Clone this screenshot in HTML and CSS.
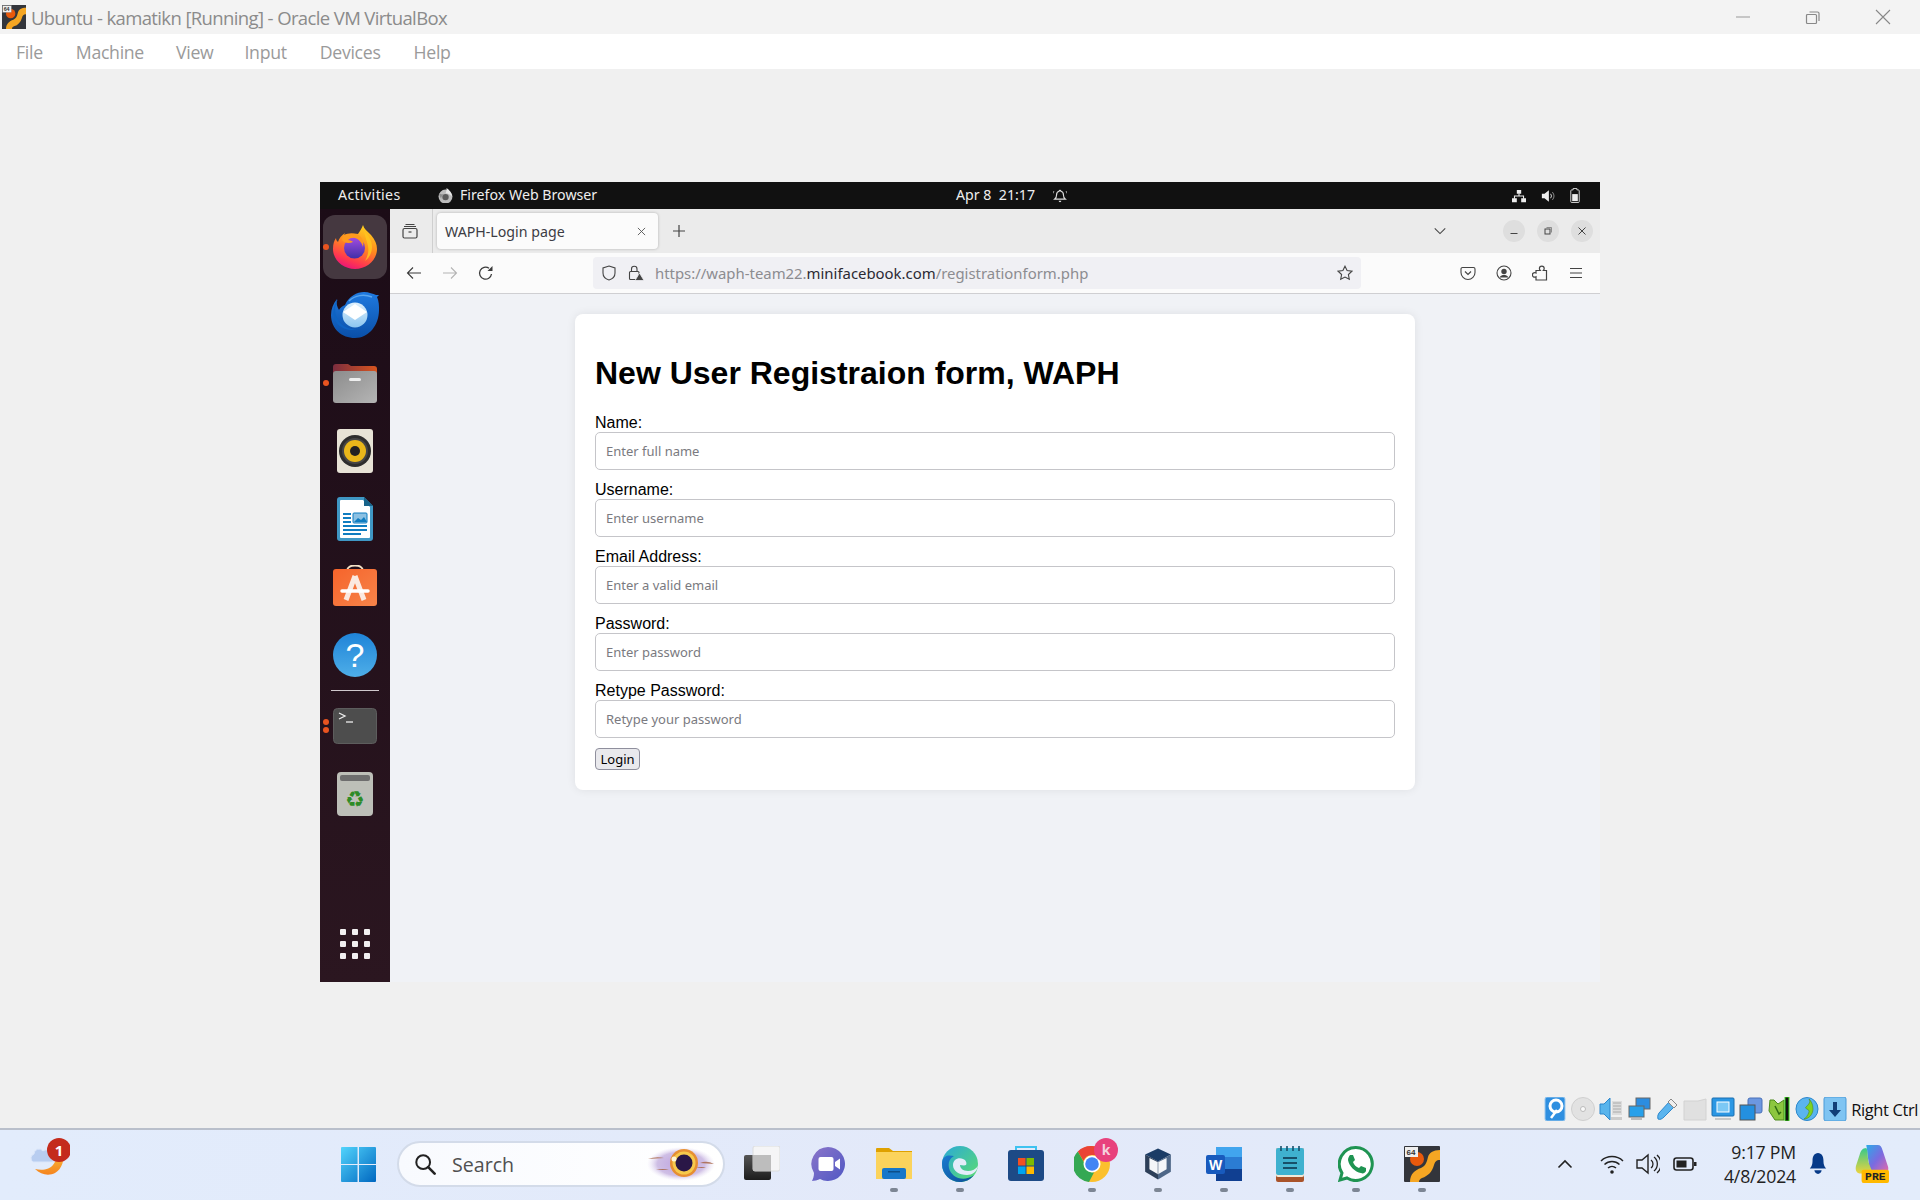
FILE: index.html
```html
<!DOCTYPE html>
<html lang="en">
<head>
<meta charset="utf-8">
<title>Ubuntu - kamatikn [Running] - Oracle VM VirtualBox</title>
<link rel="stylesheet" href="styles.css">
</head>
<body>
<div class="app">
  <header class="titlebar">
    <svg class="title-icon" viewBox="0 0 36 36"><rect width="36" height="36" fill="#33353b"/><path d="M6 36c0-8 5-12 11-14 5-2 6-7 7-11 1-4 5-7 12-7v10c-4 0-5 2-6 5-2 7-6 11-12 13-2 1-3 2-3 4z" fill="#f5a623"/><circle cx="13" cy="13" r="7" fill="#e8590c"/><rect x="1" y="1" width="13" height="10" fill="#eee" stroke="#888" stroke-width=".5"/><text x="2.500" y="9" class="svg-tiny">64</text></svg>
    <span class="title-text">Ubuntu - kamatikn [Running] - Oracle VM VirtualBox</span>
    <div class="win-controls">
      <svg class="win-btn" viewBox="0 0 16 16"><path d="M1 8h14" stroke="#999" fill="none"/></svg>
      <svg class="win-btn" viewBox="0 0 16 16"><path d="M2.500 5.500h8a1 1 0 0 1 1 1v7a1 1 0 0 1-1 1h-8a1 1 0 0 1-1-1v-7a1 1 0 0 1 1-1zM4.500 3h8a1.500 1.500 0 0 1 1.500 1.500V12" stroke="#888" stroke-width="1.200" fill="none"/></svg>
      <svg class="win-btn" viewBox="0 0 16 16"><path d="M1 1l14 14M15 1L1 15" stroke="#888" stroke-width="1.100" fill="none"/></svg>
    </div>
  </header>
  <nav class="menubar">
    <span class="menu-item menu-file">File</span>
    <span class="menu-item menu-machine">Machine</span>
    <span class="menu-item menu-view">View</span>
    <span class="menu-item menu-input">Input</span>
    <span class="menu-item menu-devices">Devices</span>
    <span class="menu-item">Help</span>
  </nav>

  <main class="host">
    <section class="vm">
      <div class="gnome-bar">
        <div class="gnome-left">
          <span class="gnome-activities">Activities</span>
          <svg class="gnome-ff" viewBox="1 1 14 14"><circle cx="8" cy="9" r="6.500" fill="#bdbdbd"/><circle cx="8" cy="9.500" r="3" fill="#5c5c5c"/><path d="M9 1c3 2 5 5 5 8-2-2-4-3-6-3 1-2 1-3 1-5z" fill="#e8e8e8"/><path d="M2 6c1 1 3 1 5 1-2 1-3 2-3 4-1-1-2-3-2-5z" fill="#8e8e8e"/></svg>
          <span class="gnome-app">Firefox Web Browser</span>
        </div>
        <div class="gnome-center">
          <span class="gnome-clock">Apr 8&nbsp;&nbsp;21:17</span>
          <svg class="gnome-sys" viewBox="0 0 16 16"><path d="M8 1.500a1 1 0 0 1 1 1c2 .5 3 2 3 4.500 0 2.500.7 3.500 2 4.500H2c1.300-1 2-2 2-4.500 0-2.500 1-4 3-4.500a1 1 0 0 1 1-1z" fill="none" stroke="#ddd" stroke-width="1.300"/><path d="M6.500 13.500a1.500 1.500 0 0 0 3 0z" fill="#ddd"/><path d="M1 2.500A7 7 0 0 0 0 5M15 2.500a7 7 0 0 1 1 2.500" stroke="#ddd" fill="none"/></svg>
        </div>
        <div class="gnome-right">
          <svg class="gnome-sys" viewBox="0 0 16 16"><path d="M5.500 1h5v4.500h-5zM0 10.500h5.500V15H0zM10.500 10.500H16V15h-5.500z" fill="#eee"/><path d="M8 5v3M2.800 11V8h10.400v3" stroke="#eee" stroke-width="1.200" fill="none"/></svg>
          <svg class="gnome-sys" viewBox="0 0 16 16"><path d="M1 5.500h3L9 1.500v13l-5-4H1z" fill="#eee"/><path d="M11 5.500a4 4 0 0 1 0 5" stroke="#ddd" stroke-width="1.100" fill="none"/><path d="M13 3.500a7 7 0 0 1 0 9" stroke="#999" fill="none"/></svg>
          <svg class="gnome-batt" viewBox="0 0 10 16"><path d="M3 .5h4v1.500h1.500a1 1 0 0 1 1 1V14.500a1 1 0 0 1-1 1h-7a1 1 0 0 1-1-1V3a1 1 0 0 1 1-1H3z" fill="none" stroke="#ddd"/><rect x="2" y="6.500" width="6" height="7.500" fill="#eee"/></svg>
        </div>
      </div>

      <div class="desktop">
        <aside class="dock">
          <div class="dock-item dock-active">
            <span class="dot"></span>
            <svg class="dock-icon-lg" viewBox="0 0 44 44">
              <defs>
                <linearGradient id="ff1" x1="0.700" y1="0" x2="0.300" y2="1"><stop offset="0" stop-color="#ffd21f"/><stop offset=".45" stop-color="#ff8a1e"/><stop offset=".8" stop-color="#ff3750"/><stop offset="1" stop-color="#e9127c"/></linearGradient>
                <linearGradient id="ff2" x1="0" y1="0" x2="0" y2="1"><stop offset="0" stop-color="#a24ce0"/><stop offset="1" stop-color="#3f2fa8"/></linearGradient>
              </defs>
              <path d="M30 0c1 4 4 6 8 10 4 5 6 9 6 14 0 11-10 20-22 20S0 35 0 24c0-5 1-8 3-11 0 2 1 3 2 4 1-4 4-7 7-9-1 2-1 3 0 4 3-3 8-4 13-3 2-3 4-6 5-9z" fill="url(#ff1)"/>
              <circle cx="21.500" cy="23" r="10.500" fill="url(#ff2)"/>
              <path d="M11 10c4-2 11-3 16 1 3 3 4 7 3 11-1-4-4-8-8-9-4-1-6 0-7 2 2 0 4 1 5 2-4 2-9 1-11-2 0-2 1-4 2-5z" fill="#ff9a1e"/>
              <path d="M31 6c4 4 8 9 8 16 0 6-3 11-7 14 3-5 4-10 3-15-1-5-3-9-4-15z" fill="#ffc61e" opacity=".85"/>
            </svg>
          </div>
          <div class="dock-item">
            <svg class="dock-icon-xl" viewBox="0 0 48 48">
              <defs><linearGradient id="tb1" x1="0" y1="0" x2="0" y2="1"><stop offset="0" stop-color="#1f7ae0"/><stop offset="1" stop-color="#0a4fa8"/></linearGradient><linearGradient id="tb2" x1="0" y1="0" x2="0" y2="1"><stop offset="0" stop-color="#dff0fc"/><stop offset="1" stop-color="#8cc6f0"/></linearGradient></defs>
              <path d="M14 14C18 5 26 1 33 1c5 0 9 2 12 3l3 0-2 2c2 4 2 9 2 13 0 15-10 28-24 28C11 47 0 38 0 24c0-6 2-11 6-16-1 4 0 8 2 11 1-2 3-4 6-5z" fill="url(#tb1)"/>
              <path d="M7 8c-3 6-4 12-1 19 3 7 11 12 20 11-8 3-18-1-22-9C1 23 2 14 7 8z" fill="#0d63c4"/>
              <path d="M18 10c6-6 15-7 23-4" stroke="#5aa6ee" stroke-width="1.500" fill="none"/>
              <circle cx="24" cy="24" r="12.500" fill="url(#tb2)"/>
              <path d="M12 21l12-8 12 8-12 8z" fill="#fff"/>
            </svg>
          </div>
          <div class="dock-item">
            <span class="dot"></span>
            <svg class="dock-icon-lg" viewBox="0 0 44 40">
              <defs><linearGradient id="fl1" x1="0" y1="0" x2="1" y2="0"><stop offset="0" stop-color="#7c2d3f"/><stop offset="1" stop-color="#d8551f"/></linearGradient><linearGradient id="fl2" x1="0" y1="0" x2="1" y2="1"><stop offset="0" stop-color="#8c8c8c"/><stop offset="1" stop-color="#b5b5b5"/></linearGradient></defs>
              <path d="M0 4a3 3 0 0 1 3-3h12l3 2h23a3 3 0 0 1 3 3v10H0z" fill="url(#fl1)"/>
              <rect y="8" width="44" height="32" rx="3" fill="url(#fl2)"/>
              <rect x="16" y="15" width="12" height="3" rx="1.500" fill="#eee"/>
            </svg>
          </div>
          <div class="dock-item">
            <svg class="dock-icon-md" viewBox="0 0 36 44">
              <rect width="36" height="44" rx="3" fill="#e7e3d6"/>
              <circle cx="18" cy="22" r="16" fill="#2d2d2d"/>
              <circle cx="18" cy="22" r="13" fill="#464646"/>
              <circle cx="18" cy="22" r="11" fill="#e9b71a"/>
              <circle cx="18" cy="22" r="5" fill="#222"/>
            </svg>
          </div>
          <div class="dock-item">
            <svg class="dock-icon-md" viewBox="0 0 36 44">
              <path d="M3 0h24l9 9v32a3 3 0 0 1-3 3H3a3 3 0 0 1-3-3V3a3 3 0 0 1 3-3z" fill="#3f97c4"/>
              <path d="M4 3h22l7 7v30a1 1 0 0 1-1 1H4a1 1 0 0 1-1-1V4a1 1 0 0 1 1-1z" fill="#fff"/>
              <path d="M27 0l9 9h-9z" fill="#17638a"/>
              <path d="M6 16h8v2H6zM6 20h8v2H6zM6 24h8v2H6zM6 28h24v2H6zM6 32h24v2H6zM6 36h18v2H6z" fill="#0f7cc0"/>
              <rect x="16" y="16" width="14" height="10" rx="1" fill="#8cc1e3" stroke="#0f7cc0"/>
              <path d="M17 25l4-4 3 2 3-3 3 5z" fill="#0f7cc0"/>
            </svg>
          </div>
          <div class="dock-item">
            <svg class="dock-icon-lg" viewBox="0 2 44 44">
              <defs><linearGradient id="sw1" x1="0" y1="0" x2="1" y2="1"><stop offset="0" stop-color="#f6642b"/><stop offset="1" stop-color="#f6844a"/></linearGradient></defs>
              <path d="M14 8c0-7.500 16-7.500 16 0" fill="none" stroke="#f5e3c8" stroke-width="2"/>
              <rect y="6" width="44" height="37" rx="3" fill="url(#sw1)"/>
              <path d="M22 13l-9 24M22 13l9 24" stroke="#fbe9e0" stroke-width="5" fill="none"/>
              <path d="M9 28h26" stroke="#fff" stroke-width="3.500" stroke-linecap="round"/>
            </svg>
          </div>
          <div class="dock-item">
            <svg class="dock-icon-lg" viewBox="0 0 44 44">
              <defs><linearGradient id="hp1" x1="0" y1="0" x2="0" y2="1"><stop offset="0" stop-color="#1f84d8"/><stop offset="1" stop-color="#4eaee8"/></linearGradient></defs>
              <circle cx="22" cy="22" r="22" fill="url(#hp1)"/>
              <text x="22" y="34" class="svg-help">?</text>
            </svg>
          </div>
          <div class="dock-sep"></div>
          <div class="dock-item">
            <span class="dot dot-upper"></span><span class="dot dot-lower"></span>
            <svg class="dock-icon-term" viewBox="0 0 44 36">
              <rect x=".5" y=".5" width="43" height="35" rx="4" fill="#4d4d4d" stroke="#5d5d5d"/>
              <path d="M6 5l6 3-6 3" fill="none" stroke="#eee" stroke-width="1.300"/>
              <path d="M13 14h7" stroke="#eee" stroke-width="1.300"/>
            </svg>
          </div>
          <div class="dock-item">
            <svg class="dock-icon-md" viewBox="0 0 36 44">
              <rect width="36" height="44" rx="4" fill="#bdbfb8"/>
              <rect x="3" y="3" width="30" height="6" rx="2" fill="#6e6e6e"/>
              <text x="18" y="35" class="svg-recycle">♻</text>
            </svg>
          </div>
          <div class="dock-spacer"></div>
          <div class="dock-grid">
            <span></span><span></span><span></span><span></span><span></span><span></span><span></span><span></span><span></span>
          </div>
        </aside>

        <div class="firefox">
          <div class="tabbar">
            <svg class="ff-icon tab-view" viewBox="0 0 16 16"><path d="M3.500 1.500h9M2 3.500h12" stroke="#444" fill="none"/><rect x="1" y="5.500" width="14" height="9.500" rx="1.500" fill="none" stroke="#444" stroke-width="1.200"/><path d="M6.500 9h3" stroke="#444" stroke-width="1.200"/></svg>
            <span class="tab-sep"></span>
            <div class="tab">
              <span class="tab-title">WAPH-Login page</span>
              <svg class="tab-close" viewBox="0 0 10 10"><path d="M1 1l8 8M9 1L1 9" stroke="#555" fill="none"/></svg>
            </div>
            <svg class="ff-icon tab-new" viewBox="0 0 16 16"><path d="M8 2v12M2 8h12" stroke="#444" stroke-width="1.200" fill="none"/></svg>
            <svg class="ff-icon tab-list" viewBox="0 0 16 16"><path d="M2 5l6 6 6-6" stroke="#444" stroke-width="1.200" fill="none"/></svg>
            <span class="wm-btn"><svg viewBox="0 0 10 10"><path d="M1.500 7.500h7" stroke="#444" fill="none"/></svg></span>
            <span class="wm-btn"><svg viewBox="0 0 10 10"><rect x="2" y="3" width="5" height="5" fill="none" stroke="#444"/><path d="M3.500 1.500h5v5" fill="none" stroke="#777" stroke-width=".8"/></svg></span>
            <span class="wm-btn"><svg viewBox="0 0 10 10"><path d="M1.500 1.500l7 7M8.500 1.500l-7 7" stroke="#444" fill="none"/></svg></span>
          </div>
          <div class="navbar">
            <svg class="ff-icon nav-back" viewBox="0 0 16 16"><path d="M15 8H1.500M7 2.500L1.500 8 7 13.500" stroke="#3a3a3a" stroke-width="1.100" fill="none"/></svg>
            <svg class="ff-icon nav-fwd" viewBox="0 0 16 16"><path d="M1 8h13.500M9 2.500L14.500 8 9 13.500" stroke="#b4b4b4" stroke-width="1.100" fill="none"/></svg>
            <svg class="ff-icon nav-reload" viewBox="0 0 16 16"><path d="M13.500 9A6 6 0 1 1 11 3.200" stroke="#3a3a3a" stroke-width="1.300" fill="none"/><path d="M14.500 1v5h-5z" fill="#3a3a3a"/></svg>
            <div class="urlbar">
              <svg class="ff-icon url-shield" viewBox="0 0 16 16"><path d="M8 1l6 2v5c0 3.500-2.500 6-6 7-3.500-1-6-3.500-6-7V3z" fill="none" stroke="#444" stroke-width="1.100"/></svg>
              <svg class="ff-icon url-lock" viewBox="0 0 16 16"><rect x="1.500" y="6.500" width="9.500" height="8" rx="1" fill="none" stroke="#444" stroke-width="1.100"/><path d="M3.500 6.500V4a2.700 2.700 0 0 1 5.500 0v2.500" fill="none" stroke="#444" stroke-width="1.100"/><path d="M11.500 8l4.500 7.500H7z" fill="#444" stroke="#f0f0f4" stroke-width=".8"/></svg>
              <span class="url-text">https://waph-team22.<span class="url-host">minifacebook.com</span>/registrationform.php</span>
              <svg class="ff-icon url-star" viewBox="0 0 16 16"><path d="M8 1.200l2.100 4.400 4.800.6-3.500 3.300.9 4.800L8 12l-4.300 2.300.9-4.800L1.100 6.200l4.800-.6z" fill="none" stroke="#444" stroke-width="1.100"/></svg>
            </div>
            <div class="nav-tools">
              <svg class="ff-icon" viewBox="0 0 16 16"><path d="M2.500 2.500h11a1.500 1.500 0 0 1 1.500 1.500v3.500a7 7 0 0 1-14 0V4a1.500 1.500 0 0 1 1.500-1.500z" fill="none" stroke="#444" stroke-width="1.100"/><path d="M5 6.500L8 9.500l3-3" fill="none" stroke="#444" stroke-width="1.200"/></svg>
              <svg class="ff-icon" viewBox="0 0 16 16"><circle cx="8" cy="8" r="7" fill="none" stroke="#444" stroke-width="1.100"/><circle cx="8" cy="6.500" r="2.700" fill="#444"/><path d="M3.500 12.500c1-2 3-2.500 4.500-2.500s3.500.5 4.500 2.500z" fill="#444"/></svg>
              <svg class="ff-icon" viewBox="0 0 16 16"><path d="M4 5.500h4.200c-.6-.7-.8-1.300-.8-1.900a2.400 2.400 0 0 1 4.800 0c0 .6-.2 1.200-.8 1.900h3.100V15H4v-3.200c-.5.300-.9.400-1.300.4a2.300 2.300 0 0 1 0-4.600c.4 0 .8.100 1.300.4z" fill="none" stroke="#444" stroke-width="1.200"/></svg>
              <svg class="ff-icon" viewBox="0 0 16 16"><path d="M2 3.500h12M2 8h12M2 12.500h12" stroke="#444" stroke-width="1.200" fill="none"/></svg>
            </div>
          </div>
          <div class="page">
            <form class="card">
              <h1 class="card-title">New User Registraion form, WAPH</h1>
              <label class="field-label" for="f-name">Name:</label>
              <input class="field-input" id="f-name" type="text" placeholder="Enter full name">
              <label class="field-label" for="f-user">Username:</label>
              <input class="field-input" id="f-user" type="text" placeholder="Enter username">
              <label class="field-label" for="f-mail">Email Address:</label>
              <input class="field-input" id="f-mail" type="text" placeholder="Enter a valid email">
              <label class="field-label" for="f-pass">Password:</label>
              <input class="field-input" id="f-pass" type="password" placeholder="Enter password">
              <label class="field-label" for="f-again">Retype Password:</label>
              <input class="field-input" id="f-again" type="password" placeholder="Retype your password">
              <button class="login-btn" type="button">Login</button>
            </form>
          </div>
        </div>
      </div>
    </section>

    <div class="vbox-status">
      <svg class="st" viewBox="0 0 24 24"><rect x="2" width="20" height="24" rx="2" fill="#2f8fe0" stroke="#9cc9ee"/><circle cx="13" cy="9" r="6" fill="none" stroke="#fff" stroke-width="3"/><path d="M14 13l-6 8" stroke="#fff" stroke-width="2.500"/></svg>
      <svg class="st" viewBox="0 0 24 24"><circle cx="12" cy="12" r="11.500" fill="#e2e2e2" stroke="#cfcfcf"/><circle cx="12" cy="12" r="2.500" fill="#fafafa" stroke="#bbb"/></svg>
      <svg class="st" viewBox="0 0 24 24"><path d="M1 7h4l6-6v22l-6-6H1z" fill="#58b4ec" stroke="#2c87cc"/><path d="M13 4h10v14H13z" fill="#ddd"/><path d="M14 6h8M14 9h8M14 12h8M14 15h8" stroke="#aaa"/><path d="M12 20h11v3H12z" fill="#ccc"/></svg>
      <svg class="st" viewBox="0 0 24 24"><rect x="9" y="1" width="14" height="11" fill="#2c8de0" stroke="#666"/><rect x="2" y="9" width="15" height="11" fill="#27a0ea" stroke="#666"/><path d="M4 21h11v2H4z" fill="#bbb"/></svg>
      <svg class="st" viewBox="0 0 24 24"><path d="M15 4L4 16c-2 3-1 5-1 6 2 1 4 0 6-2L20 9z" fill="#5ab4ee" stroke="#2c87cc"/><path d="M16 2l6 6-3 3-6-6z" fill="#eee" stroke="#888"/></svg>
      <svg class="st" viewBox="0 0 24 24"><path d="M1 4h14l8-2v21H1z" fill="#e0e0e0" stroke="#d2d2d2"/></svg>
      <svg class="st" viewBox="0 0 24 24"><rect x="1" y="1" width="22" height="18" rx="1" fill="#2b97e4" stroke="#1a6fb0"/><rect x="6" y="5" width="12" height="10" fill="#7cc8f5" stroke="#fff"/><path d="M4 21h16v2H4z" fill="#c8c8c8"/></svg>
      <svg class="st" viewBox="0 0 24 24"><rect x="9" y="1" width="14" height="15" rx="2" fill="#6c97e0" stroke="#4a70b8"/><rect x="1" y="8" width="15" height="15" fill="#2490e0" stroke="#555"/></svg>
      <svg class="st" viewBox="0 0 24 24"><path d="M3 3l4 0 4 4 6-4v20H8L2 14z" fill="#8cc63f" stroke="#4c8a1c"/><path d="M8 9l4 8 2-2" stroke="#2f6b12" stroke-width="1.500" fill="none"/><rect x="18" y="0" width="4" height="24" fill="#111" stroke="#3ddc1c"/></svg>
      <svg class="st" viewBox="0 0 24 24"><ellipse cx="12" cy="12" rx="11" ry="11.500" fill="#5ab4ee" stroke="#2c87cc"/><path d="M14 2c2 3 0 5-3 8-2 2 4 2 3 5s-3 6-5 7c5 0 9-5 9-10s-2-8-4-10z" fill="#7ed321" stroke="#4c8a1c" stroke-width=".6"/></svg>
      <svg class="st" viewBox="0 0 24 24"><rect x="1" width="22" height="24" rx="2" fill="#7fc4f2" stroke="#4a9ad8"/><path d="M10 5h4v8h4l-6 7-6-7h4z" fill="#123e78"/></svg>
      <span class="right-ctrl">Right Ctrl</span>
    </div>
  </main>

  <footer class="taskbar">
    <div class="weather">
      <svg class="weather-icon" viewBox="0 0 40 41">
        <defs><linearGradient id="wx" x1="0" y1="0" x2="0" y2="1"><stop offset="0" stop-color="#f9c33c"/><stop offset="1" stop-color="#f5841f"/></linearGradient></defs>
        <path d="M33 12c2 10-1 19-8 23-6 3-14 2-20-4 8 2 15 0 18-4 3-4 5-9 10-15z" fill="url(#wx)"/>
        <path d="M3 24a4.500 4.500 0 0 1 1-8 5 5 0 0 1 9-3 5 5 0 0 1 8 3 4 4 0 0 1 1 8z" fill="#b8cdf0" stroke="#dbe6fa"/>
        <circle cx="29" cy="12" r="12" fill="#c42b1c"/>
        <text x="29" y="17.500" class="svg-badge">1</text>
      </svg>
    </div>
    <svg class="win-logo" viewBox="0 0 36 36">
      <defs><linearGradient id="wl" x1="0" y1="0" x2="1" y2="1"><stop offset="0" stop-color="#52d4fc"/><stop offset="1" stop-color="#0067c0"/></linearGradient></defs>
      <path d="M0 1a1 1 0 0 1 1-1h16v17.400H0zM18.500 0H35a1 1 0 0 1 1 1v16.400H18.500zM0 18.600h17V36H1a1 1 0 0 1-1-1zM18.500 18.600H36V35a1 1 0 0 1-1 1H18.500z" fill="url(#wl)"/>
    </svg>
    <div class="searchbox">
      <svg class="search-glass" viewBox="0 0 24 24"><circle cx="10" cy="10" r="7.500" fill="none" stroke="#222" stroke-width="2.200"/><path d="M15.500 15.500l7 7" stroke="#222" stroke-width="2.800" stroke-linecap="round"/></svg>
      <span class="search-text">Search</span>
      <svg class="search-art" viewBox="0 0 68 36">
        <defs><radialGradient id="ecl"><stop offset="0" stop-color="#b89adf" stop-opacity=".9"/><stop offset=".7" stop-color="#a98bd0" stop-opacity=".55"/><stop offset="1" stop-color="#d9cdef" stop-opacity="0"/></radialGradient></defs>
        <ellipse cx="34" cy="18" rx="34" ry="17" fill="url(#ecl)"/>
        <path d="M1 13q8-3 16-1zM9 24q7-2 13 0zM53 17q7-3 14 1zM49 22q6-2 10 0z" fill="#a5603f" opacity=".8"/>
        <circle cx="37" cy="17" r="14" fill="#e98a1f" opacity=".9"/>
        <circle cx="37" cy="17" r="11.500" fill="#f6c94c"/>
        <circle cx="37" cy="17" r="8.500" fill="#2a1747"/>
        <circle cx="27" cy="13" r="2.500" fill="#fff6d8"/>
      </svg>
    </div>
    <div class="task-icons">
      <div class="task">
        <svg class="task-icon" viewBox="0 0 36 36"><defs><linearGradient id="tv" x1="0" y1="0" x2="0" y2="1"><stop offset="0" stop-color="#555"/><stop offset="1" stop-color="#1c1c1c"/></linearGradient></defs><rect x="0" y="9" width="27" height="25" rx="2" fill="url(#tv)"/><rect x="9" y="0" width="27" height="25" rx="2" fill="#f6f6f6" stroke="#dcdcdc" opacity=".95"/><rect x="9" y="9" width="18" height="16" fill="#bdbdbd"/></svg>
      </div>
      <div class="task">
        <svg class="task-icon" viewBox="0 0 36 36"><defs><linearGradient id="mt" x1="0" y1="0" x2="1" y2="1"><stop offset="0" stop-color="#8b75c9"/><stop offset="1" stop-color="#5058c4"/></linearGradient></defs><path d="M18 1a17 17 0 1 1-8 32c-2 1-6 2-8 2 1-2 2-5 2-8A17 17 0 0 1 18 1z" fill="url(#mt)"/><rect x="8.500" y="11" width="15" height="14" rx="2" fill="#fff"/><path d="M25 16l5-3.500v11L25 20z" fill="#fff"/></svg>
      </div>
      <div class="task">
        <svg class="task-icon" viewBox="0 0 36 36"><path d="M0 3a1 1 0 0 1 1-1h12l4 3h19v8H0z" fill="#dfa100"/><path d="M0 6h36v27H0z" fill="#fbd35c"/><rect x="6" y="22" width="24" height="11" rx="2" fill="#1777c9"/><rect x="12" y="25" width="12" height="1.500" fill="#0c4f8a"/></svg>
        <span class="run"></span>
      </div>
      <div class="task">
        <svg class="task-icon" viewBox="0 0 36 36"><defs><linearGradient id="ed1" x1="0" y1="0" x2="1" y2="1"><stop offset="0" stop-color="#2aa9d8"/><stop offset="1" stop-color="#5dde6d"/></linearGradient><linearGradient id="ed2" x1="0" y1="0" x2="1" y2="1"><stop offset="0" stop-color="#1a7bd0"/><stop offset="1" stop-color="#0c4f96"/></linearGradient></defs><circle cx="18" cy="18" r="18" fill="url(#ed1)"/><path d="M0 18C0 8 8 9 12 10c-5 3-6 7-5 12 2 9 14 15 25 7-4 5-9 7-14 7C8 36 0 28 0 18z" fill="url(#ed2)"/><path d="M11 19c0-5 5-8 10-6 3 1 4 4 3 6-2 1-4 0-6 0 0 3 3 6 8 6 4 0 8-2 10-5-1 6-6 9-11 9-8 0-14-4-14-10z" fill="#e4ecfa"/></svg>
        <span class="run"></span>
      </div>
      <div class="task">
        <svg class="task-icon" viewBox="0 0 36 36"><path d="M8 6V1h20v5" fill="none" stroke="#3ec2f0" stroke-width="2"/><rect y="4" width="36" height="31" rx="3" fill="#1d4a86"/><rect x="10" y="12" width="7.500" height="7.500" fill="#f25022"/><rect x="18.500" y="12" width="7.500" height="7.500" fill="#7fba00"/><rect x="10" y="20.500" width="7.500" height="7.500" fill="#00a4ef"/><rect x="18.500" y="20.500" width="7.500" height="7.500" fill="#ffb900"/></svg>
      </div>
      <div class="task">
        <svg class="task-icon task-chrome" viewBox="0 0 48 44"><circle cx="18" cy="26" r="18" fill="#fbc02d"/><path d="M18 8a18 18 0 0 1 15.600 9H18a9 9 0 0 0-8.500 6L3.800 13.500A18 18 0 0 1 18 8z" fill="#ea4335"/><path d="M3.800 13.500l7.700 13.500a8 8 0 0 0 8.500 7.500L15 44A18 18 0 0 1 3.800 13.500z" fill="#34a853"/><circle cx="18" cy="26" r="8.500" fill="#fff"/><circle cx="18" cy="26" r="6.800" fill="#4285f4"/><circle cx="32" cy="12" r="12" fill="#e8417c"/><text x="32" y="17" class="svg-badge-k">k</text></svg>
        <span class="run"></span>
      </div>
      <div class="task">
        <svg class="task-icon" viewBox="-3 -1 42 40"><path d="M18 1L33 8v20l-15 9L3 28V8z" fill="#dfe3ea"/><path d="M18 1L33 8 18 16 3 8z" fill="#1b3c66"/><path d="M3 8l15 8v21L3 28z" fill="#2d3f59"/><path d="M33 8L18 16v21l15-9z" fill="#4e6788"/><path d="M8 12l10 5 10-5v13l-10 6-10-6z" fill="#f4f6f9"/><path d="M18 17v14" stroke="#7a8aa0"/></svg>
        <span class="run"></span>
      </div>
      <div class="task">
        <svg class="task-icon" viewBox="0 0 36 36"><path d="M10 1h24a2 2 0 0 1 2 2v30a2 2 0 0 1-2 2H10z" fill="#2b7cd3"/><path d="M10 1h26v10H10z" fill="#41a5ee"/><path d="M10 11h26v12H10z" fill="#2b7cd3"/><path d="M10 23h26v12H10z" fill="#103f91"/><rect y="9" width="19" height="19" rx="2" fill="#185abd"/><text x="9.500" y="23.500" class="svg-word">W</text></svg>
        <span class="run"></span>
      </div>
      <div class="task">
        <svg class="task-icon-note" viewBox="0 0 28 36"><rect y="2" width="28" height="34" rx="2" fill="#a9532a"/><rect y="2" width="28" height="29" rx="2" fill="#f1ead9"/><rect y="2" width="28" height="27" rx="2" fill="#3fb1cf"/><path d="M7 12h14M7 17h14M7 22h14" stroke="#17506a" stroke-width="1.800"/><path d="M5 0v5M11 0v5M17 0v5M23 0v5" stroke="#17506a" stroke-width="1.600"/></svg>
        <span class="run"></span>
      </div>
      <div class="task">
        <svg class="task-icon" viewBox="0 0 36 36"><path d="M18 1.500A16.500 16.500 0 1 1 9 32L2 34l2-7A16.500 16.500 0 0 1 18 1.500z" fill="#fff" stroke="#1f9452" stroke-width="3"/><path d="M12 9l3 0 2 5-2 2c1 3 3 5 6 6l2-2 5 2v3c-1 2-3 3-5 2-6-1-12-7-13-13 0-2 1-4 2-5z" fill="#1f9452"/></svg>
        <span class="run"></span>
      </div>
      <div class="task">
        <svg class="task-icon" viewBox="0 0 36 36"><rect width="36" height="36" rx="1" fill="#33353b"/><path d="M6 36c0-8 5-12 11-14 5-2 6-7 7-11 1-4 5-7 12-7v10c-4 0-5 2-6 5-2 7-6 11-12 13-2 1-3 2-3 4z" fill="#f5a623"/><circle cx="13" cy="13" r="7" fill="#e8590c"/><rect x="1" y="1" width="13" height="10" fill="#eee"/><text x="2.500" y="9" class="svg-tiny">64</text></svg>
        <span class="run"></span>
      </div>
    </div>
    <div class="tray">
      <svg class="tray-chev" viewBox="0 0 16 16"><path d="M1.500 11.500L8 5l6.500 6.500" fill="none" stroke="#222" stroke-width="1.600"/></svg>
      <svg class="tray-wifi" viewBox="0 0 24 24"><path d="M1 9a16 16 0 0 1 22 0M4.500 12.500a11 11 0 0 1 15 0M8 16a6 6 0 0 1 8 0" fill="none" stroke="#222" stroke-width="1.500"/><circle cx="12" cy="20" r="1.800" fill="#222"/></svg>
      <svg class="tray-vol" viewBox="0 0 24 24"><path d="M1 8h5l6-5v18l-6-5H1z" fill="none" stroke="#222" stroke-width="1.400"/><path d="M15 8a5 5 0 0 1 0 8M18 5a9 9 0 0 1 0 14M21 3a12 12 0 0 1 0 18" fill="none" stroke="#222" stroke-width="1.300"/></svg>
      <svg class="tray-batt" viewBox="0 0 24 24"><rect x="1" y="6" width="19" height="12" rx="2.500" fill="none" stroke="#222" stroke-width="1.600"/><rect x="3.500" y="8.500" width="10" height="7" fill="#222"/><rect x="21" y="10" width="2.500" height="4" fill="#222"/></svg>
      <div class="clock"><span>9:17 PM</span><span>4/8/2024</span></div>
      <svg class="tray-bell" viewBox="0 0 22 26"><path d="M11 1c4 0 6 4 6 8 0 5 1 7 3 9H2c2-2 3-4 3-9 0-4 2-8 6-8z" fill="#073a88"/><path d="M7 20h8c0 2-2 4-4 4s-4-2-4-4z" fill="#073a88"/></svg>
      <svg class="tray-copilot" viewBox="0 0 36 40">
        <defs><linearGradient id="cp" x1="0" y1="0" x2="1" y2="1"><stop offset="0" stop-color="#2ca9e8"/><stop offset=".5" stop-color="#7a6be0"/><stop offset="1" stop-color="#e86aa8"/></linearGradient><linearGradient id="cp2" x1="0" y1="0" x2="0" y2="1"><stop offset="0" stop-color="#36c98c"/><stop offset="1" stop-color="#ecd33c"/></linearGradient></defs>
        <path d="M12 0h12c3 0 4 2 5 5l6 18c1 4-1 7-5 7H18l-3-8-2-14c0-4-1-6-1-8z" fill="url(#cp)"/>
        <path d="M12 3C8 3 6 6 5 10L1 22c-1 5 1 8 5 8h13l-4-10c-2-5-1-14-3-17z" fill="url(#cp2)"/>
        <rect x="7" y="26" width="29" height="14" rx="2" fill="#ffb900"/>
        <text x="21.500" y="37" class="svg-pre">PRE</text>
      </svg>
    </div>
  </footer>
</div>
</body>
</html>
```

FILE: styles.css
```css
* { box-sizing: border-box; }
html, body { margin: 0; padding: 0; }
body { width: 1920px; height: 1200px; overflow: hidden; font-family: "Open Sans", "Noto Sans", sans-serif; background: #f0f0f0; }
.app { display: flex; flex-direction: column; width: 1920px; height: 1200px; }

/* host window */
.titlebar { display: flex; align-items: center; height: 34px; flex: none; background: #f3f3f3; padding-left: 2px; }
.title-icon { width: 24px; height: 24px; flex: none; }
.title-text { margin-left: 5px; font-size: 18.500px; color: #8b8b8b; letter-spacing: -0.620px; white-space: nowrap; font-family: "Open Sans", sans-serif; }
.win-controls { display: flex; margin-left: auto; align-items: center; gap: 54px; padding-right: 29px; }
.win-btn { width: 16px; height: 16px; }
.menubar { display: flex; align-items: center; height: 35px; flex: none; background: #fff; padding-left: 16px; font-size: 17.700px; color: #9a9a9a; letter-spacing: -0.300px; }
.menu-item { white-space: nowrap; }
.menu-file { margin-right: 33px; }
.menu-machine { margin-right: 32px; }
.menu-view { margin-right: 31px; }
.menu-input { margin-right: 33px; }
.menu-devices { margin-right: 33px; }

.host { position: relative; flex: 1; min-height: 0; padding: 113px 0 0 320px; background: #f0f0f0; }
.vm { display: flex; flex-direction: column; width: 1280px; height: 800px; }

/* gnome bar */
.gnome-bar { display: grid; grid-template-columns: 636px auto 1fr; align-items: center; height: 27px; flex: none; background: #111; color: #eee; font-size: 14.200px; font-family: "Noto Sans", sans-serif; }
.gnome-left { display: flex; align-items: center; padding-left: 18px; }
.gnome-activities { width: 100px; white-space: nowrap; padding-bottom: 2px; letter-spacing: 0.350px; }
.gnome-ff { width: 15px; height: 15px; flex: none; margin-right: 7px; }
.gnome-app { white-space: nowrap; padding-bottom: 2px; }
.gnome-center { display: flex; align-items: center; gap: 18px; }
.gnome-clock { white-space: nowrap; padding-bottom: 2px; }
.gnome-right { display: flex; align-items: center; justify-content: flex-end; gap: 15px; padding-right: 20px; }
.gnome-sys { width: 14px; height: 14px; flex: none; }
.gnome-batt { width: 10px; height: 15px; flex: none; }

.desktop { display: flex; flex: 1; min-height: 0; }

/* dock */
.dock { display: flex; flex-direction: column; flex: none; width: 70px; padding: 4px 0; background: linear-gradient(180deg, #1c0c17, #2b1620); }
.dock-item { position: relative; display: flex; align-items: center; justify-content: center; height: 68px; flex: none; }
.dock-active::before { content: ""; position: absolute; left: 3px; top: 2px; width: 64px; height: 64px; border-radius: 12px; background: #453840; }
.dock-active svg { position: relative; }
.dock-icon-lg { width: 44px; height: 44px; }
.dock-icon-xl { width: 48px; height: 48px; }
.dock-icon-md { width: 36px; height: 44px; }
.dock-icon-term { width: 44px; height: 36px; }
.dot { position: absolute; left: 3px; top: 31px; width: 6px; height: 6px; border-radius: 50%; background: #e95420; }
.dot-upper { top: 27px; }
.dot-lower { top: 35px; }
.dock-sep { flex: none; height: 1px; margin: 1px 11px; background: #cfc8cc; }
.dock-spacer { flex: 1; }
.dock-grid { display: grid; grid-template-columns: repeat(3, 6px); grid-auto-rows: 6px; gap: 6px; flex: none; align-self: center; margin-bottom: 19px; }
.dock-grid span { border-radius: 1px; background: #f2f0f1; }

/* firefox */
.firefox { display: flex; flex-direction: column; flex: 1; min-width: 0; }
.tabbar { display: flex; align-items: center; height: 44px; flex: none; background: #ebebeb; }
.ff-icon { width: 16px; height: 16px; flex: none; }
.tab-view { margin-left: 12px; }
.tab-sep { width: 1px; height: 44px; margin-left: 14px; background: #cfcfcf; flex: none; }
.tab { display: flex; align-items: center; justify-content: space-between; flex: none; width: 221px; height: 36px; margin-left: 4px; padding: 0 12px 0 8px; border-radius: 4px; background: #fbfbfb; box-shadow: 0 0 3px rgba(0, 0, 0, 0.25); font-size: 14.200px; color: #3c3c44; font-family: "Noto Sans", sans-serif; }
.tab-title { white-space: nowrap; padding-top: 1px; }
.tab-close { width: 9px; height: 9px; }
.tab-new { margin-left: 13px; }
.tab-list { margin-left: 746px; margin-right: 44px; width: 14px; height: 14px; }
.wm-btn { display: flex; align-items: center; justify-content: center; width: 22px; height: 22px; margin-left: 12px; border-radius: 50%; background: #dedede; flex: none; }
.wm-btn svg { width: 10px; height: 10px; }

.navbar { display: flex; align-items: center; height: 41px; flex: none; padding-bottom: 1px; background: #fbfbfb; border-bottom: 1px solid #cfcfd2; }
.nav-back { margin-left: 16px; }
.nav-fwd { margin-left: 20px; }
.nav-reload { margin-left: 20px; }
.urlbar { display: flex; align-items: center; flex: none; width: 768px; height: 32px; margin-left: 99px; padding: 0 8px; border-radius: 4px; background: #f0f0f4; }
.url-lock { margin-left: 11px; }
.url-text { margin-left: 11px; padding-top: 1px; font-size: 14.900px; color: #8c8c90; white-space: nowrap; font-family: "Noto Sans", sans-serif; }
.url-host { color: #2b2a33; }
.url-star { margin-left: auto; }
.nav-tools { display: flex; gap: 20px; margin-left: 99px; }

.page { flex: 1; min-height: 0; padding-top: 20px; background: #f0f2f6; }
.card { display: block; width: 840px; margin: 0 auto; padding: 20px; border-radius: 8px; background: #fff; box-shadow: 0 0 10px rgba(0, 0, 0, 0.08); font-family: "Liberation Sans", Arial, sans-serif; }
.card-title { margin: 21.440px 0; font-size: 32px; font-weight: 700; color: #000; }
.field-label { display: block; font-size: 16px; color: #000; line-height: 18.400px; }
.field-input { display: block; width: 100%; height: 38px; margin-bottom: 10.500px; padding: 0 10px; border: 1px solid #c5c5c9; border-radius: 5px; background: #fff; font-size: 13px; font-family: "Noto Sans", sans-serif; }
.field-input::placeholder { color: #7a7a80; opacity: 1; }
.login-btn { display: block; height: 22px; width: 45px; padding: 0; border: 1px solid #8f8f9d; border-radius: 4px; background: #e9e9ed; color: #000; font-size: 13px; font-family: "Noto Sans", sans-serif; }

/* vbox status strip */
.vbox-status { position: absolute; right: 2px; bottom: 7px; display: flex; align-items: center; gap: 4px; height: 24px; }
.st { width: 24px; height: 24px; flex: none; }
.right-ctrl { margin-left: 0; font-size: 16.500px; color: #111; white-space: nowrap; letter-spacing: -0.400px; font-family: "Open Sans", sans-serif; }

/* taskbar */
.taskbar { display: flex; align-items: center; flex: none; height: 72px; padding-bottom: 2px; border-top: 2px solid #b9bfcb; background: linear-gradient(90deg, #e2ecfc, #e3e9f9 50%, #e3ecfb); }
.weather { flex: none; width: 341px; padding-left: 30px; margin-bottom: 11px; }
.weather-icon { display: block; width: 40px; height: 41px; }
.win-logo { width: 35px; height: 35px; flex: none; margin-right: 21px; }
.searchbox { display: flex; align-items: center; flex: none; width: 328px; height: 46px; padding-left: 15px; border: 2px solid #d3dbe9; border-radius: 23px; background: linear-gradient(90deg, #f8fafe, #fff); }
.search-glass { width: 22px; height: 22px; flex: none; }
.search-text { margin-left: 16px; font-size: 19.600px; color: #505050; font-family: "Open Sans", sans-serif; }
.search-art { width: 68px; height: 36px; margin-left: auto; margin-right: 8px; flex: none; }
.task-icons { display: flex; flex: none; margin-left: 4px; }
.task { position: relative; display: flex; align-items: center; justify-content: center; width: 66px; height: 58px; }
.task-icon { width: 36px; height: 36px; }
.task-chrome { width: 48px; height: 44px; margin: -8px 0 0 12px; }
.task-icon-note { width: 28px; height: 36px; }
.run { position: absolute; left: 29px; top: 53px; width: 8px; height: 4px; border-radius: 2px; background: #7d8694; }
.tray { position: relative; flex: 1; display: flex; align-items: center; height: 100%; }
.tray-chev { width: 16px; height: 16px; margin-left: 102px; flex: none; }
.tray-wifi { width: 24px; height: 24px; margin-left: 27px; flex: none; }
.tray-vol { width: 24px; height: 24px; margin-left: 12px; flex: none; }
.tray-batt { width: 24px; height: 24px; margin-left: 13px; flex: none; }
.clock { display: flex; flex-direction: column; align-items: flex-end; width: 99px; flex: none; font-size: 17.700px; line-height: 24px; color: #222; letter-spacing: -0.200px; }
.tray-bell { width: 20px; height: 24px; margin-left: 12px; flex: none; }
.tray-copilot { width: 34px; height: 38px; margin-left: 27px; flex: none; }

/* svg texts */
.svg-tiny { font: 700 8px "Liberation Sans", sans-serif; fill: #333; }
.svg-help { font: 400 34px "Liberation Sans", sans-serif; fill: #fff; text-anchor: middle; }
.svg-recycle { font: 400 22px "DejaVu Sans", sans-serif; fill: #2e8b27; text-anchor: middle; }
.svg-badge { font: 700 15px "Open Sans", sans-serif; fill: #fff; text-anchor: middle; }
.svg-badge-k { font: 700 14px "Open Sans", sans-serif; fill: #f5d0dc; text-anchor: middle; }
.svg-word { font: 700 14px "Liberation Sans", sans-serif; fill: #fff; text-anchor: middle; }
.svg-pre { font: 700 12px "Liberation Mono", monospace; fill: #222; text-anchor: middle; }
```
